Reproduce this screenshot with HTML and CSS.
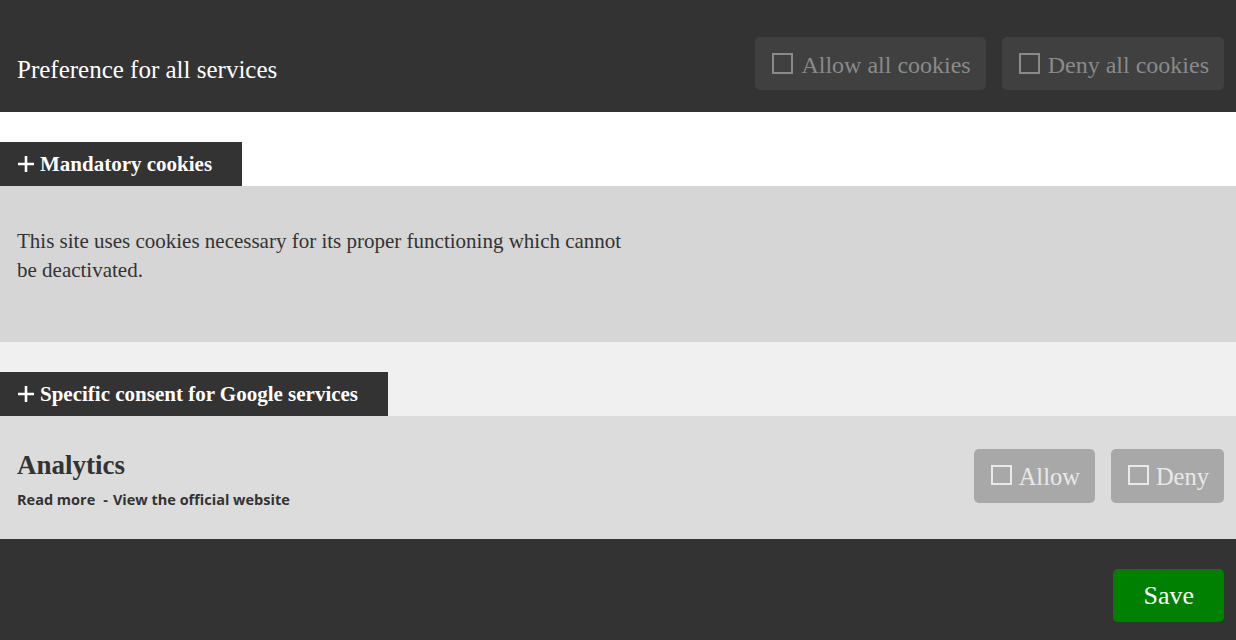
FILE: index.html
```html
<!DOCTYPE html>
<html>
<head>
<meta charset="utf-8">
<link rel="stylesheet" href="styles.css">
</head>
<body>
<div class="page">
  <header class="topbar">
    <div class="title">Preference for all services</div>
    <div class="actions">
      <button class="btn btn-dark"><span class="box"></span>Allow all cookies</button>
      <button class="btn btn-dark"><span class="box"></span>Deny all cookies</button>
    </div>
  </header>

  <section class="group group-white">
    <div class="tab"><svg class="plus" width="16" height="16" viewBox="0 0 16 16"><path d="M8 0V16M0 8H16" stroke="#fff" stroke-width="2.6"/></svg>Mandatory cookies</div>
    <div class="panel panel-mandatory">
      <p class="desc">This site uses cookies necessary for its proper functioning which cannot be deactivated.</p>
    </div>
  </section>

  <section class="group group-light">
    <div class="tab"><svg class="plus" width="16" height="16" viewBox="0 0 16 16"><path d="M8 0V16M0 8H16" stroke="#fff" stroke-width="2.6"/></svg>Specific consent for Google services</div>
    <div class="panel panel-service">
      <div class="service-info">
        <div class="service-name">Analytics</div>
        <div class="service-links"><a>Read more</a><span class="sep">-</span><a>View the official website</a></div>
      </div>
      <div class="service-actions">
        <button class="btn btn-grey"><span class="box"></span>Allow</button>
        <button class="btn btn-grey"><span class="box"></span>Deny</button>
      </div>
    </div>
  </section>

  <footer class="footer">
    <button class="btn btn-save">Save</button>
  </footer>
</div>
</body>
</html>
```

FILE: styles.css
```css
* { box-sizing: border-box; }
html, body { margin: 0; padding: 0; }
body {
  width: 1236px;
  height: 640px;
  overflow: hidden;
  font-family: "Liberation Serif", "Times New Roman", serif;
  background: #333;
}
.page { display: flex; flex-direction: column; height: 640px; }

.topbar {
  background: #333;
  height: 112px;
  display: flex;
  align-items: center;
  justify-content: space-between;
  padding: 15px 12px 0 17px;
}
.title {
  color: #fff;
  font-size: 25px;
  padding-top: 12px;
}
.actions { display: flex; gap: 16px; }

.btn {
  border: none;
  border-radius: 5px;
  font-family: "Liberation Serif", "Times New Roman", serif;
  font-size: 24px;
  display: inline-flex;
  align-items: center;
  cursor: pointer;
  padding-top: 4px;
}
.box {
  display: inline-block;
  width: 21px;
  height: 21px;
  border: 2px solid currentColor;
  margin-right: 8px;
  margin-top: -4px;
}
.btn-dark {
  background: #404040;
  color: #8a8a8a;
  height: 53px;
  padding-left: 17px;
  padding-right: 15px;
}
.btn-grey {
  background: #a8a8a8;
  color: #e9e9e9;
  height: 54px;
  font-size: 24.5px;
  padding-left: 17px;
  padding-right: 15px;
}
.btn-grey .box { height: 20px; margin-right: 7px; }
.btn-save {
  background: #008000;
  color: #fff;
  height: 53px;
  padding: 0 30px;
  font-size: 26px;
}

.group { padding-top: 30px; }
.group-white { background: #fff; }
.group-light { background: #f0f0f0; }

.tab {
  display: inline-flex;
  align-items: center;
  background: #333;
  color: #fff;
  font-weight: bold;
  font-size: 21px;
  height: 44px;
  padding: 0 30px 0 18px;
}
.plus { margin-right: 6px; flex: none; }

.panel-mandatory {
  background: #d6d6d6;
  height: 156px;
  padding: 41px 17px 0 17px;
}
.desc {
  margin: 0;
  max-width: 620px;
  font-size: 21px;
  line-height: 29px;
  color: #333;
}

.panel-service {
  background: #dcdcdc;
  height: 123px;
  display: flex;
  justify-content: space-between;
  align-items: center;
  padding: 0 12px 0 17px;
}
.service-name {
  font-size: 27px;
  font-weight: bold;
  color: #333;
  padding-top: 4px;
}
.service-links {
  margin-top: 9px;
  font-family: "Open Sans", "Noto Sans", sans-serif;
  font-weight: 700;
  font-size: 14.5px;
  color: #333;
}
.sep { margin: 0 5px 0 8px; }
.service-actions { display: flex; gap: 16px; margin-top: -4px; }

.footer {
  flex: 1;
  background: #333;
  display: flex;
  justify-content: flex-end;
  align-items: center;
  padding: 12px 12px 0;
}
```
